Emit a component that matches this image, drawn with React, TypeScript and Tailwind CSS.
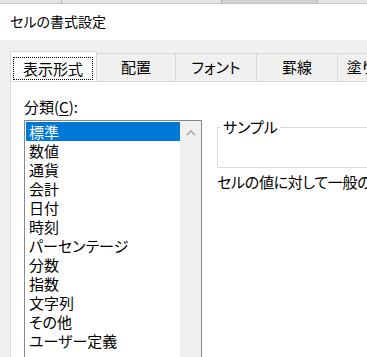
import React from "react";

const categories = [
  "標準",
  "数値",
  "通貨",
  "会計",
  "日付",
  "時刻",
  "パーセンテージ",
  "分数",
  "指数",
  "文字列",
  "その他",
  "ユーザー定義",
];

const tabs = [
  { label: "配置", w: "w-[79px]" },
  { label: "フォント", w: "w-[81px]" },
  { label: "罫線", w: "w-[81px]" },
  { label: "塗りつぶし", w: "w-[87px]" },
];

export default function App() {
  return (
    <div className="w-[367px] h-[357px] overflow-hidden bg-white text-black font-['Yu_Gothic_UI','Noto_Sans_CJK_JP',sans-serif] [font-feature-settings:'palt']">
      {/* sheet header remnant */}
      <div className="flex h-[4px] bg-[#e6e6e6] border-b border-[#c6c6c6]">
        <div className="w-[62px] border-r border-[#b0b0b0]" />
        <div className="w-[160px] border-r border-[#b0b0b0]" />
        <div className="w-[96px] bg-[#d2d2d2] border-r border-[#b0b0b0]" />
      </div>

      {/* title */}
      <div className="h-[36px] flex items-center pl-[10px] text-[14px] pb-[1px]">
        セルの書式設定
      </div>

      <div className="bg-[#f0f0f0] pl-[10px] pt-[11px] h-full">
        {/* tabs */}
        <div className="flex items-end overflow-hidden">
          <div className="relative z-10 -mb-px shrink-0 w-[87px] h-[31px] bg-white border border-b-0 border-[#d9d9d9] pt-[5px] pl-[2px] pr-[3px] pb-[2px] flex">
            <div className="flex-1 border border-dotted border-black flex items-center justify-center text-[15px] leading-none pb-[1px] whitespace-nowrap">
              表示形式
            </div>
          </div>
          {tabs.map((t) => (
            <div
              key={t.label}
              className={`${t.w} shrink-0 h-[28px] border-t border-r border-[#d9d9d9] flex items-center justify-center text-[15px] whitespace-nowrap overflow-hidden`}
            >
              {t.label}
            </div>
          ))}
        </div>

        {/* panel */}
        <div className="bg-white border-l border-t border-[#d9d9d9] h-[300px] flex pl-[13px] pt-[15px]">
          <div className="flex flex-col">
            <div className="text-[15px] leading-[20px] h-[22px]">
              分類(<span className="underline underline-offset-2">C</span>):
            </div>
            <div className="mt-[1px] w-[178px] h-[260px] border border-[#828790] flex">
              <div className="flex-1 pt-px pl-px">
                {categories.map((c, i) => (
                  <div
                    key={c}
                    className={`h-[19px] leading-[19px] pl-[3px] text-[15px] whitespace-nowrap ${
                      i === 0 ? "bg-[#0078d7] text-white" : ""
                    }`}
                  >
                    {c}
                  </div>
                ))}
              </div>
              <div className="w-[21px] bg-[#f0f0f0] flex justify-center pt-[9px]">
                <svg width="10" height="6" viewBox="0 0 10 6">
                  <path d="M1 5 L5 1 L9 5" fill="none" stroke="#a6a6a6" strokeWidth="1.5" />
                </svg>
              </div>
            </div>
          </div>

          <div className="ml-[15px] pt-[22px] flex flex-col">
            <fieldset className="w-[200px] h-[49px] border border-[#dcdcdc] pl-[3px] m-0 p-0">
              <legend className="px-[2px] text-[15px] leading-[16px] ml-0">サンプル</legend>
            </fieldset>
            <div className="mt-[4px] text-[15px] leading-[20px] whitespace-nowrap tracking-[-0.3px]">
              セルの値に対して一般の書式を設定します。
            </div>
          </div>
        </div>
      </div>
    </div>
  );
}
